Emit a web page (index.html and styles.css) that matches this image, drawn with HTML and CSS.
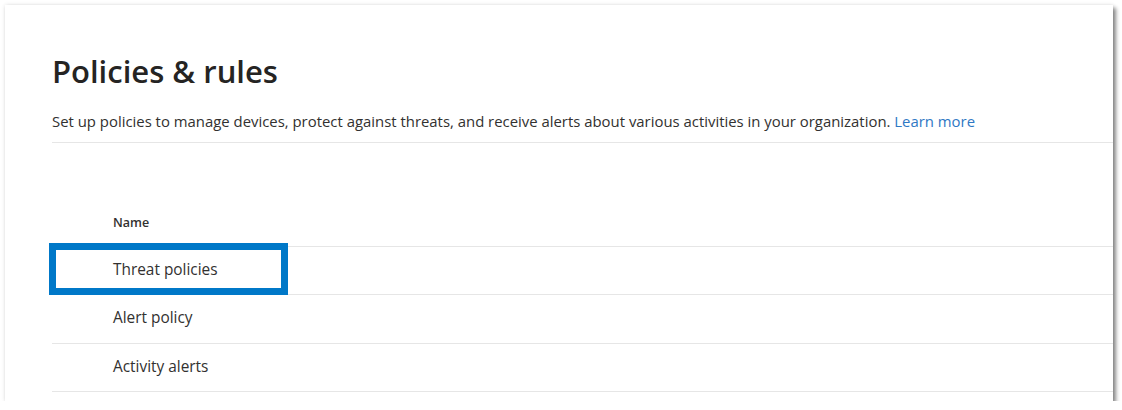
FILE: index.html
```html
<!DOCTYPE html>
<html>
<head>
<meta charset="utf-8">
<link rel="stylesheet" href="styles.css">
</head>
<body>
<div class="panel">
  <h1 class="title">Policies &amp; rules</h1>
  <p class="desc">Set up policies to manage devices, protect against threats, and receive alerts about various activities in your organization. <a class="link" href="#">Learn more</a></p>
  <div class="table">
    <div class="thead">Name</div>
    <div class="row"><span class="cell">Threat policies</span><span class="highlight"></span></div>
    <div class="row tall"><span class="cell">Alert policy</span></div>
    <div class="row"><span class="cell">Activity alerts</span></div>
  </div>
</div>
</body>
</html>
```
FILE: styles.css
```css
html, body {
  margin: 0;
  padding: 0;
  background: #ffffff;
}
body {
  font-family: "Open Sans", "Noto Sans", sans-serif;
  color: #323130;
}
.panel {
  margin: 5px 0 0 5px;
  width: 1108px;
  height: 396px;
  box-sizing: border-box;
  background: #fff;
  padding-left: 47px;
  box-shadow: 0 0 4px rgba(0,0,0,0.12), 3px 3px 4px rgba(0,0,0,0.45);
  overflow: hidden;
}
.title {
  margin: 0;
  padding-top: 46px;
  font-size: 31px;
  font-weight: 600;
  line-height: 40px;
  color: #252423;
}
.desc {
  margin: 0;
  padding-top: 19px;
  height: 32px;
  box-sizing: content-box;
  font-size: 14.9px;
  line-height: 22px;
  border-bottom: 1px solid #e6e6e6;
}
.link {
  color: #2f78c4;
  text-decoration: none;
}
.table {
  padding-top: 59px;
}
.thead {
  height: 43px;
  padding-top: 1px;
  padding-left: 61px;
  font-size: 12.5px;
  font-weight: 600;
  line-height: 40px;
  border-bottom: 1px solid #e6e6e6;
}
.row {
  position: relative;
  height: 47px;
  padding-left: 61px;
  font-size: 15.4px;
  line-height: 45px;
  border-bottom: 1px solid #e6e6e6;
}
.row.tall {
  height: 48px;
  line-height: 46px;
}
.cell {
  font-weight: 500;
}
.highlight {
  position: absolute;
  left: -3px;
  top: -4px;
  width: 239px;
  height: 52px;
  box-sizing: border-box;
  border: 7px solid #0078c8;
}
```
